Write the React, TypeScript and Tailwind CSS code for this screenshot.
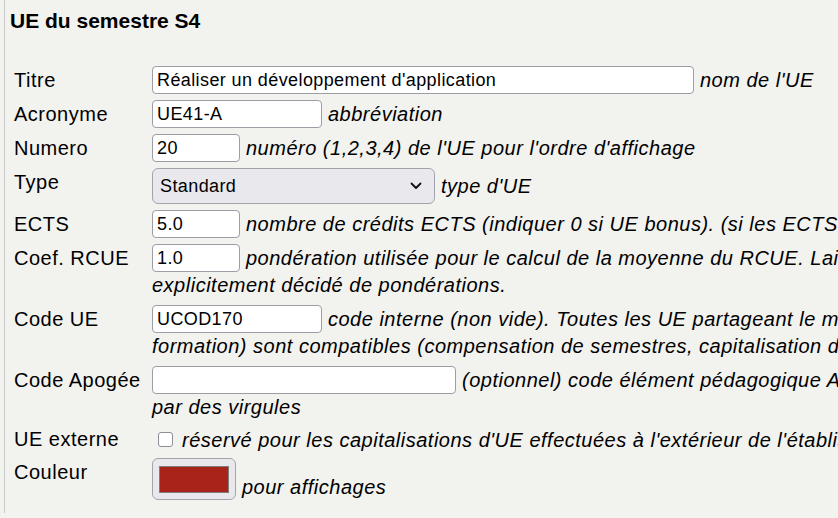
import type { ReactNode } from 'react';

const inputCls =
    'h-[28px] rounded-[4px] border border-[#9d9da6] bg-white px-[4px] text-[18px] tracking-[0.4px] text-black outline-none';

function Row({ label, children, tall }: { label: string; children: ReactNode; tall?: boolean }) {
    return (
        <div className="flex py-[3px]">
            <div className={`w-[138px] shrink-0 whitespace-nowrap ${tall ? 'leading-[25px]' : 'leading-[28px]'}`}>
                {label}
            </div>
            <div className="whitespace-nowrap">{children}</div>
        </div>
    );
}

function Help({ children }: { children: ReactNode }) {
    return <span className="ml-[6px] italic">{children}</span>;
}

export default function App() {
    return (
        <div
            className="h-[518px] w-[838px] overflow-hidden bg-[#f2f2ef] text-[20px] tracking-[0.5px] text-black"
            style={{ fontFamily: '"Liberation Sans", Arial, sans-serif' }}
        >
            <div className="ml-[4px] w-[1400px] border-l border-[#c9c9c9] pb-[10px] pl-[5px]">
                <h3 className="pt-[9px] text-[21px] font-bold leading-[24px] tracking-normal">UE du semestre S4</h3>

                <div className="mt-[30px] pl-[4px]">
                    <Row label="Titre">
                        <div className="flex h-[28px] items-center">
                            <input className={`${inputCls} w-[542px]`} defaultValue="Réaliser un développement d'application" />
                            <Help>nom de l'UE</Help>
                        </div>
                    </Row>
                    <Row label="Acronyme">
                        <div className="flex h-[28px] items-center">
                            <input className={`${inputCls} w-[170px]`} defaultValue="UE41-A" />
                            <Help>abbréviation</Help>
                        </div>
                    </Row>
                    <Row label="Numero">
                        <div className="flex h-[28px] items-center">
                            <input className={`${inputCls} w-[88px]`} defaultValue="20" />
                            <Help>numéro (1,2,3,4) de l'UE pour l'ordre d'affichage</Help>
                        </div>
                    </Row>
                    <Row label="Type">
                        <div className="flex h-[36px] items-center">
                            <div className="flex h-[36px] w-[283px] items-center justify-between rounded-[6px] border border-[#a3a3ad] bg-[#e9e8ed] pl-[7px] pr-[12px] text-[18px] tracking-[0.4px]">
                                <span>Standard</span>
                                <svg width="12" height="8" viewBox="0 0 12 8" fill="none">
                                    <path d="M1.5 1.5 6 6l4.5-4.5" stroke="#111" strokeWidth="1.8" strokeLinecap="round" strokeLinejoin="round" />
                                </svg>
                            </div>
                            <Help>type d'UE</Help>
                        </div>
                    </Row>
                    <Row label="ECTS">
                        <div className="flex h-[28px] items-center">
                            <input className={`${inputCls} w-[88px]`} defaultValue="5.0" />
                            <Help>
                                nombre de crédits ECTS (indiquer 0 si UE bonus). (si les ECTS dépendent du parcours, voir plus bas.)
                            </Help>
                        </div>
                    </Row>
                    <Row label="Coef. RCUE">
                        <div className="flex h-[28px] items-center">
                            <input className={`${inputCls} w-[88px]`} defaultValue="1.0" />
                            <Help>
                                pondération utilisée pour le calcul de la moyenne du RCUE. Laisser à 1, sauf si votre établissement a
                            </Help>
                        </div>
                        <div className="leading-[27px] italic">explicitement décidé de pondérations.</div>
                    </Row>
                    <Row label="Code UE">
                        <div className="flex h-[28px] items-center">
                            <input className={`${inputCls} w-[170px]`} defaultValue="UCOD170" />
                            <Help>
                                code interne (non vide). Toutes les UE partageant le même code (et le même code de
                            </Help>
                        </div>
                        <div className="leading-[27px] italic">
                            formation) sont compatibles (compensation de semestres, capitalisation d'UE). Voir liste ci-dessous.
                        </div>
                    </Row>
                    <Row label="Code Apogée">
                        <div className="flex h-[28px] items-center">
                            <input className={`${inputCls} w-[304px]`} defaultValue="" />
                            <Help>(optionnel) code élément pédagogique Apogée ou liste de codes ELP séparés</Help>
                        </div>
                        <div className="leading-[27px] italic">par des virgules</div>
                    </Row>
                    <Row label="UE externe" tall>
                        <div className="flex h-[25px] items-center">
                            <span className="ml-[6px] h-[15px] w-[15px] rounded-[3px] border border-[#8e8e98] bg-white" />
                            <span className="ml-[9px] italic">
                                réservé pour les capitalisations d'UE effectuées à l'extérieur de l'établissement
                            </span>
                        </div>
                    </Row>
                    <Row label="Couleur">
                        <div className="flex items-end">
                            <div className="flex h-[42px] w-[84px] items-center justify-center rounded-[6px] border border-[#a3a3ad] bg-[#e9e8ed]">
                                <div className="h-[27px] w-[70px] border border-[#7d7d7d] bg-[#a8231a]" />
                            </div>
                            <span className="mb-[2px] ml-[6px] italic leading-[21px]">pour affichages</span>
                        </div>
                    </Row>
                </div>
            </div>
        </div>
    );
}
